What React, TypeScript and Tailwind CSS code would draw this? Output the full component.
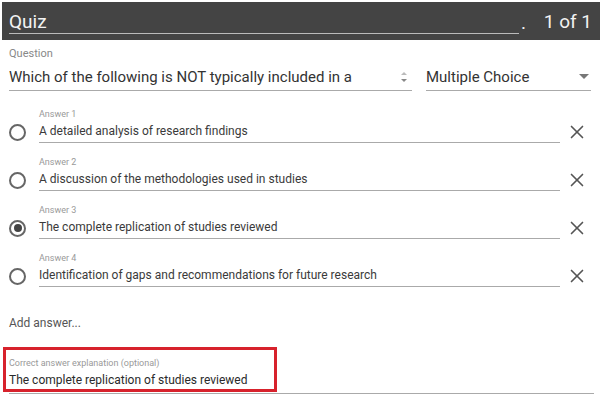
import { X } from "lucide-react";

const answers = [
  { label: "Answer 1", text: "A detailed analysis of research findings", checked: false },
  { label: "Answer 2", text: "A discussion of the methodologies used in studies", checked: false },
  { label: "Answer 3", text: "The complete replication of studies reviewed", checked: true },
  { label: "Answer 4", text: "Identification of gaps and recommendations for future research", checked: false },
];

function Radio({ checked }: { checked: boolean }) {
  return (
    <span className="flex h-[17px] w-[17px] items-center justify-center rounded-full border-2 border-[#666]">
      {checked && <span className="h-[8px] w-[8px] rounded-full bg-[#444]" />}
    </span>
  );
}

function AnswerRow({ label, text, checked }: { label: string; text: string; checked: boolean }) {
  return (
    <div className="flex items-end pt-[13px]">
      <div className="flex h-[22px] w-[39px] items-center pl-[9px]">
        <Radio checked={checked} />
      </div>
      <div className="w-[521px]">
        <div className="text-[9px] leading-[12px] text-[#999]">{label}</div>
        <div className="h-[23px] border-b border-[#aaa] pt-[1px] text-[12px] leading-[20px] text-[#3a3a3a]">{text}</div>
      </div>
      <div className="flex h-[22px] w-[34px] items-center justify-center">
        <X size={22} strokeWidth={1.8} className="text-[#555]" />
      </div>
    </div>
  );
}

export default function App() {
  return (
    <div
      className="h-[398px] w-[600px] overflow-hidden bg-white"
      style={{ fontFamily: "Roboto, 'Liberation Sans', sans-serif" }}
    >
      <div className="ml-[2px] mt-[2px] flex h-[38px] items-end bg-[#444] pb-[6px] pl-[7px] pr-[8px] text-[#f2f2f2]">
        <div className="w-[510px] border-b border-[#bbb] text-[19px] leading-[22px]">Quiz</div>
        <span className="ml-[2px] text-[19px] leading-[22px]">.</span>
        <span className="ml-auto pb-[1px] text-[19px] leading-[22px]">1 of 1</span>
      </div>

      <div className="px-[9px] pt-[7px]">
        <div className="text-[11px] leading-[14px] text-[#888]">Question</div>
        <div className="flex items-end gap-[14px]">
          <div className="flex h-[30px] w-[403px] items-center border-b border-[#aaa] pt-[3px] text-[15px] text-[#333]">
            <span className="flex-1 truncate">Which of the following is NOT typically included in a</span>
            <svg width="8" height="14" viewBox="0 0 8 14" className="mr-[4px]">
              <path d="M1 5 L4 2 L7 5 Z" fill="#bbb" />
              <path d="M1 9 L4 12 L7 9 Z" fill="#888" />
            </svg>
          </div>
          <div className="flex h-[30px] flex-1 items-center border-b border-[#aaa] pt-[3px] text-[15px] text-[#333]">
            <span className="flex-1">Multiple Choice</span>
            <svg width="10" height="6" viewBox="0 0 10 6" className="mr-[2px]">
              <path d="M0 0 L10 0 L5 5 Z" fill="#777" />
            </svg>
          </div>
        </div>
      </div>

      <div className="mt-[4px]">
        {answers.map((a) => (
          <AnswerRow key={a.label} {...a} />
        ))}
      </div>

      <div className="px-[9px] pt-[26px] text-[12px] leading-[20px] text-[#555]">Add answer...</div>

      <div className="relative mx-[9px] mt-[24px] w-[585px]">
        <div className="text-[9px] leading-[12px] text-[#999]">Correct answer explanation (optional)</div>
        <div className="h-[25px] border-b border-[#aaa] pt-[1px] text-[12px] leading-[20px] text-[#2a2a2a]">
          The complete replication of studies reviewed
        </div>
        <div className="absolute left-[-6px] top-[-10px] h-[45px] w-[274px] border-[3px] border-[#d7222c]" />
      </div>
    </div>
  );
}
